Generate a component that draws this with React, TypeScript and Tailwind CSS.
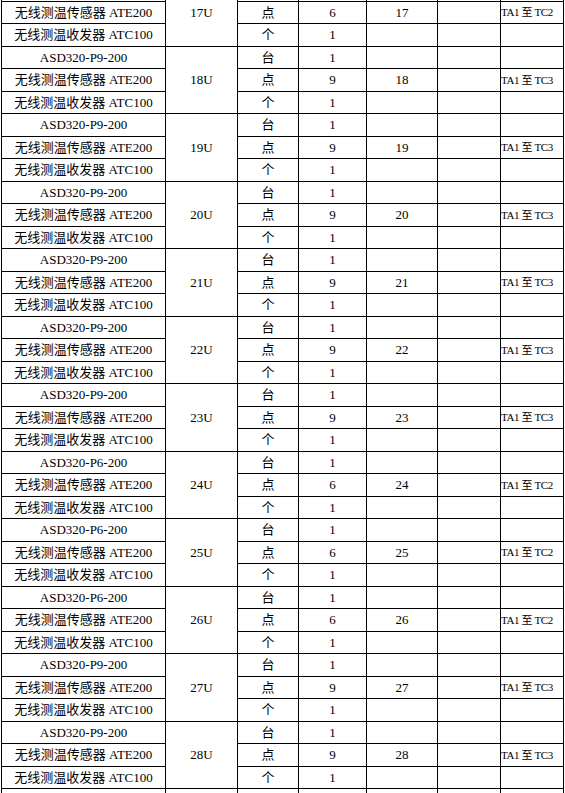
import React from "react";

// One group = 3 rows: controller, sensor, transceiver
type Group = { u: string; model: string; points: number; no: number; range: string };

const groups: Group[] = [
  { u: "17U", model: "ASD320-P6-200", points: 6, no: 17, range: "TA1 至 TC2" },
  { u: "18U", model: "ASD320-P9-200", points: 9, no: 18, range: "TA1 至 TC3" },
  { u: "19U", model: "ASD320-P9-200", points: 9, no: 19, range: "TA1 至 TC3" },
  { u: "20U", model: "ASD320-P9-200", points: 9, no: 20, range: "TA1 至 TC3" },
  { u: "21U", model: "ASD320-P9-200", points: 9, no: 21, range: "TA1 至 TC3" },
  { u: "22U", model: "ASD320-P9-200", points: 9, no: 22, range: "TA1 至 TC3" },
  { u: "23U", model: "ASD320-P9-200", points: 9, no: 23, range: "TA1 至 TC3" },
  { u: "24U", model: "ASD320-P6-200", points: 6, no: 24, range: "TA1 至 TC2" },
  { u: "25U", model: "ASD320-P6-200", points: 6, no: 25, range: "TA1 至 TC2" },
  { u: "26U", model: "ASD320-P6-200", points: 6, no: 26, range: "TA1 至 TC2" },
  { u: "27U", model: "ASD320-P9-200", points: 9, no: 27, range: "TA1 至 TC3" },
  { u: "28U", model: "ASD320-P9-200", points: 9, no: 28, range: "TA1 至 TC3" },
];

const cell =
  "flex min-w-0 items-center justify-center overflow-hidden border-r border-b border-black whitespace-nowrap";

type Row = { name: string; unit: string; qty: string; no: string; range: string };

function Rows({ u, rows }: { u: string; rows: Row[] }) {
  return (
    <>
      {rows.map((r, i) => (
        <React.Fragment key={i}>
          <div className={`${cell} col-start-1 border-l`}>{r.name}</div>
          {i === 0 && <div className={`${cell} row-span-3`}>{u}</div>}
          <div className={cell}>{r.unit}</div>
          <div className={cell}>{r.qty}</div>
          <div className={cell}>{r.no}</div>
          <div className={cell}></div>
          <div className={`${cell} justify-start text-[11px] tracking-[-0.4px]`}>{r.range}</div>
        </React.Fragment>
      ))}
    </>
  );
}

const empty: Row = { name: "", unit: "", qty: "", no: "", range: "" };

function groupRows(g: Group, hideFirst: boolean): Row[] {
  return [
    hideFirst ? empty : { name: g.model, unit: "台", qty: "1", no: "", range: "" },
    { name: "无线测温传感器 ATE200", unit: "点", qty: String(g.points), no: String(g.no), range: g.range },
    { name: "无线测温收发器 ATC100", unit: "个", qty: "1", no: "", range: "" },
  ];
}

export default function App() {
  return (
    <div
      className="h-[793px] w-[565px] overflow-hidden bg-white text-[13px] text-black"
      style={{ fontFamily: '"Liberation Serif", "Noto Sans CJK SC", serif' }}
    >
      {/* scrolled table: first row of 17U is above the fold */}
      <div className="-mt-[21px] ml-px grid grid-flow-row-dense auto-rows-[22.5px] grid-cols-[165px_72px_61px_68px_71px_63px_63px]">
        {groups.map((g, i) => (
          <Rows key={g.u} u={g.u} rows={groupRows(g, i === 0)} />
        ))}
        {/* next group starts just below the fold */}
        <Rows u="" rows={[empty, empty, empty]} />
      </div>
    </div>
  );
}
